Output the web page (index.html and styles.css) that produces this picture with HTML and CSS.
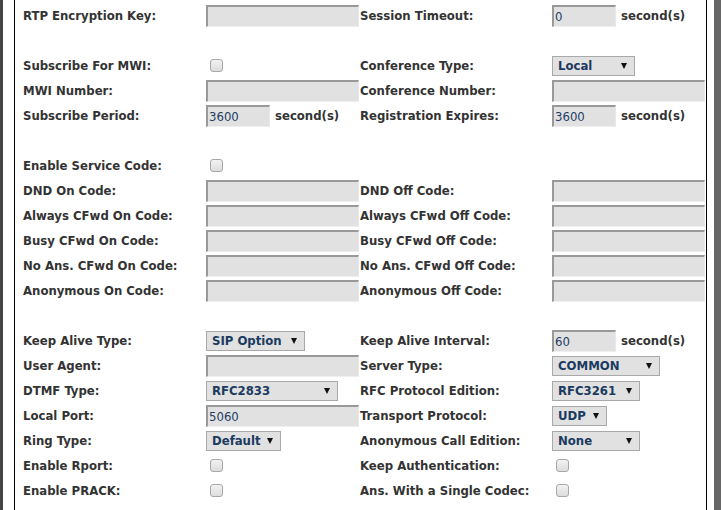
FILE: index.html
```html
<!DOCTYPE html>
<html>
<head>
<meta charset="utf-8">
<link rel="stylesheet" href="styles.css">
</head>
<body>
<div class="frame">
  <div class="edge-left"></div>
  <div class="content">
    <div class="row">
      <span class="lbl">RTP Encryption Key:</span><span class="cell"><input class="txt long" type="text"></span>
      <span class="lbl">Session Timeout:</span><span class="cell"><input class="txt short" type="text" value="0"><span class="unit">second(s)</span></span>
    </div>
    <div class="row"></div>
    <div class="row">
      <span class="lbl">Subscribe For MWI:</span><span class="cell"><input class="chk" type="checkbox"></span>
      <span class="lbl">Conference Type:</span><span class="cell"><span class="sel w83">Local</span></span>
    </div>
    <div class="row">
      <span class="lbl">MWI Number:</span><span class="cell"><input class="txt long" type="text"></span>
      <span class="lbl">Conference Number:</span><span class="cell"><input class="txt long" type="text"></span>
    </div>
    <div class="row">
      <span class="lbl">Subscribe Period:</span><span class="cell"><input class="txt short" type="text" value="3600"><span class="unit">second(s)</span></span>
      <span class="lbl">Registration Expires:</span><span class="cell"><input class="txt short" type="text" value="3600"><span class="unit">second(s)</span></span>
    </div>
    <div class="row"></div>
    <div class="row">
      <span class="lbl">Enable Service Code:</span><span class="cell"><input class="chk" type="checkbox"></span>
      <span class="lbl"></span><span class="cell"></span>
    </div>
    <div class="row">
      <span class="lbl">DND On Code:</span><span class="cell"><input class="txt long" type="text"></span>
      <span class="lbl">DND Off Code:</span><span class="cell"><input class="txt long" type="text"></span>
    </div>
    <div class="row">
      <span class="lbl">Always CFwd On Code:</span><span class="cell"><input class="txt long" type="text"></span>
      <span class="lbl">Always CFwd Off Code:</span><span class="cell"><input class="txt long" type="text"></span>
    </div>
    <div class="row">
      <span class="lbl">Busy CFwd On Code:</span><span class="cell"><input class="txt long" type="text"></span>
      <span class="lbl">Busy CFwd Off Code:</span><span class="cell"><input class="txt long" type="text"></span>
    </div>
    <div class="row">
      <span class="lbl">No Ans. CFwd On Code:</span><span class="cell"><input class="txt long" type="text"></span>
      <span class="lbl">No Ans. CFwd Off Code:</span><span class="cell"><input class="txt long" type="text"></span>
    </div>
    <div class="row">
      <span class="lbl">Anonymous On Code:</span><span class="cell"><input class="txt long" type="text"></span>
      <span class="lbl">Anonymous Off Code:</span><span class="cell"><input class="txt long" type="text"></span>
    </div>
    <div class="row"></div>
    <div class="row">
      <span class="lbl">Keep Alive Type:</span><span class="cell"><span class="sel w99">SIP Option</span></span>
      <span class="lbl">Keep Alive Interval:</span><span class="cell"><input class="txt short" type="text" value="60"><span class="unit">second(s)</span></span>
    </div>
    <div class="row">
      <span class="lbl">User Agent:</span><span class="cell"><input class="txt long" type="text"></span>
      <span class="lbl">Server Type:</span><span class="cell"><span class="sel w108">COMMON</span></span>
    </div>
    <div class="row">
      <span class="lbl">DTMF Type:</span><span class="cell"><span class="sel w132">RFC2833</span></span>
      <span class="lbl">RFC Protocol Edition:</span><span class="cell"><span class="sel w88">RFC3261</span></span>
    </div>
    <div class="row">
      <span class="lbl">Local Port:</span><span class="cell"><input class="txt long" type="text" value="5060"></span>
      <span class="lbl">Transport Protocol:</span><span class="cell"><span class="sel w55">UDP</span></span>
    </div>
    <div class="row">
      <span class="lbl">Ring Type:</span><span class="cell"><span class="sel w75">Default</span></span>
      <span class="lbl">Anonymous Call Edition:</span><span class="cell"><span class="sel w88">None</span></span>
    </div>
    <div class="row">
      <span class="lbl">Enable Rport:</span><span class="cell"><input class="chk" type="checkbox"></span>
      <span class="lbl">Keep Authentication:</span><span class="cell"><input class="chk" type="checkbox"></span>
    </div>
    <div class="row">
      <span class="lbl">Enable PRACK:</span><span class="cell"><input class="chk" type="checkbox"></span>
      <span class="lbl">Ans. With a Single Codec:</span><span class="cell"><input class="chk" type="checkbox"></span>
    </div>
  </div>
  <div class="edge-right"></div>
</div>
</body>
</html>
```

FILE: styles.css
```css
html, body {
  margin: 0;
  padding: 0;
  background: #fff;
  height: 100%;
  overflow: hidden;
}
.frame {
  display: flex;
  height: 510px;
  width: 721px;
}
.edge-left {
  width: 3px;
  background: #444;
  margin-right: 11px;
  flex: none;
}
.content {
  width: 693px;
  flex: none;
  border-left: 1px solid #000;
  border-right: 1px solid #000;
  padding: 3px 0 0 8px;
  box-sizing: border-box;
  overflow: hidden;
  font-family: "DejaVu Sans Condensed", "DejaVu Sans", sans-serif;
  font-stretch: condensed;
  font-size: 13px;
  color: #333;
}
.edge-right {
  width: 7px;
  margin-left: 7px;
  background: #666;
  flex: none;
}
.row {
  display: grid;
  grid-template-columns: 183px 154px 192px 154px;
  height: 25px;
  align-items: center;
  white-space: nowrap;
}
.lbl {
  font-weight: bold;
}
.cell {
  display: flex;
  align-items: center;
  height: 25px;
}
.txt {
  box-sizing: border-box;
  height: 22px;
  margin: 0;
  padding: 0 0 0 1px;
  background: #e1e1e1;
  border-style: solid;
  border-width: 2px 1px 1px 2px;
  border-color: #999 #e8e8e8 #efefef #999;
  font-family: "DejaVu Sans Condensed", "DejaVu Sans", sans-serif;
  font-stretch: condensed;
  font-size: 13px;
  color: #1e3d66;
  outline: none;
}
.txt.long { width: 153px; }
.txt.short { width: 64px; }
.unit {
  font-weight: bold;
  margin-left: 5px;
}
.chk {
  appearance: none;
  -webkit-appearance: none;
  box-sizing: border-box;
  width: 13px;
  height: 13px;
  margin: 0 0 0 4px;
  border: 1px solid #a8a8a8;
  border-radius: 3px;
  background: linear-gradient(#f2f2f2, #dcdcdc);
}
.sel {
  position: relative;
  box-sizing: border-box;
  height: 20px;
  line-height: 18px;
  padding-left: 5px;
  background: #e1e1e1;
  border: 1px solid #a9a9a9;
  font-weight: bold;
  color: #1b3a60;
}
.sel::after {
  content: "";
  position: absolute;
  right: 7px;
  top: 6px;
  border-left: 3px solid transparent;
  border-right: 3px solid transparent;
  border-top: 6px solid #111;
}
.w55 { width: 55px; }
.w75 { width: 75px; }
.w83 { width: 83px; }
.w88 { width: 88px; }
.w99 { width: 99px; }
.w108 { width: 108px; }
.w132 { width: 132px; }
```
